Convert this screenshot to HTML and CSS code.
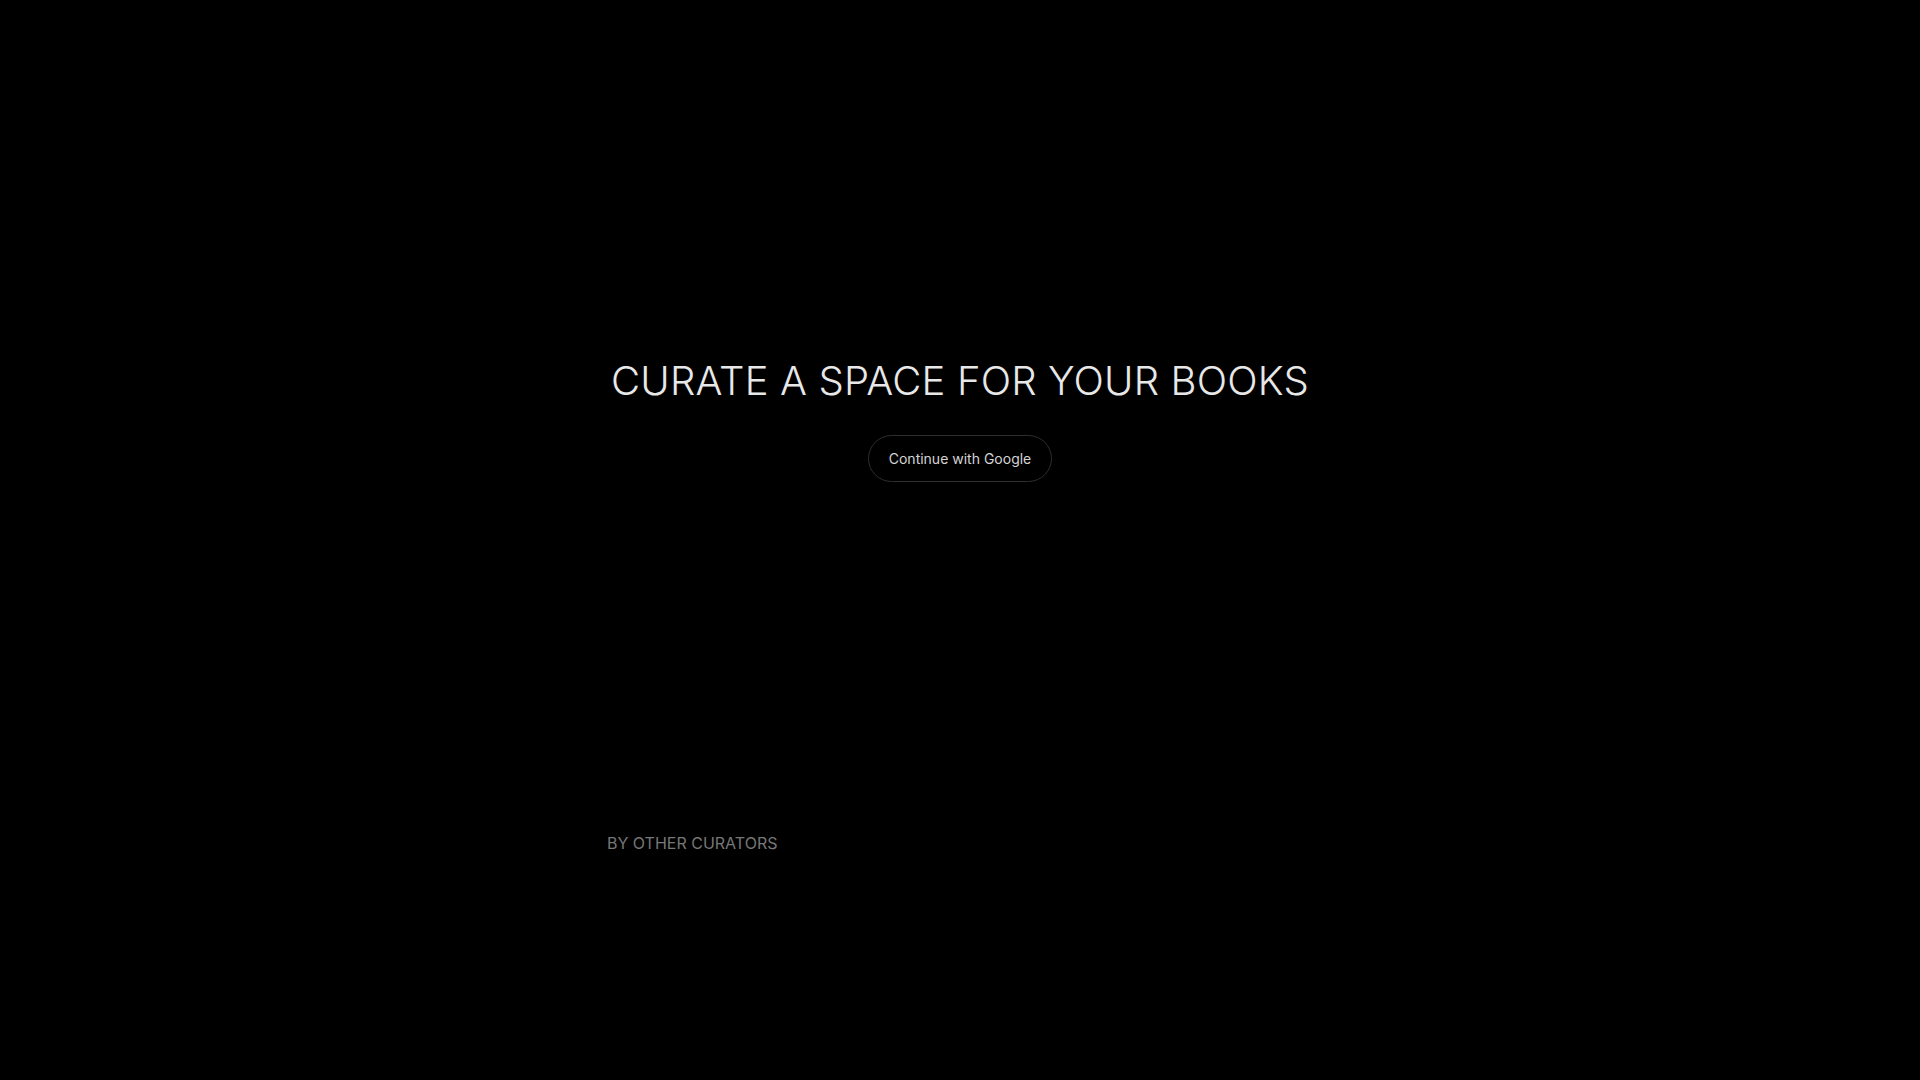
FILE: index.html
```html
<!DOCTYPE html>
<html lang="en">
<head>
<meta charset="utf-8">
<title>Curate a space for your books</title>
<link rel="stylesheet" href="styles.css">
</head>
<body>
<main class="page">
  <section class="hero">
    <h1 class="hero-title">CURATE A SPACE FOR YOUR BOOKS</h1>
    <button class="google-btn" type="button">Continue with Google</button>
  </section>
  <section class="gallery">
    <h2 class="gallery-label">BY OTHER CURATORS</h2>
  </section>
</main>
</body>
</html>
```
FILE: styles.css
```css
html, body {
  margin: 0;
  padding: 0;
  background: #000;
}
body {
  font-family: Inter, "Noto Sans", "Liberation Sans", sans-serif;
  color: #e6e6e6;
  -webkit-font-smoothing: antialiased;
}
.page {
  display: flex;
  flex-direction: column;
  min-height: 1080px;
}
.hero {
  box-sizing: border-box;
  height: 831px;
  padding-top: 7px;
  display: flex;
  flex-direction: column;
  align-items: center;
  justify-content: center;
}
.hero-title {
  margin: 0;
  font-size: 40px;
  line-height: 48px;
  font-weight: 300;
  letter-spacing: 0.004em;
  color: #e8e8e8;
}
.google-btn {
  margin-top: 30px;
  height: 47px;
  padding: 0 20px;
  border: 1px solid #2e2e2e;
  border-radius: 999px;
  background: #000;
  color: #d4d4d4;
  font-family: inherit;
  font-size: 14px;
  font-weight: 400;
  cursor: pointer;
}
.gallery {
  width: 706px;
  margin: 0 auto;
}
.gallery-label {
  margin: 0;
  font-size: 16px;
  line-height: 24px;
  font-weight: 400;
  color: #777;
}
```
